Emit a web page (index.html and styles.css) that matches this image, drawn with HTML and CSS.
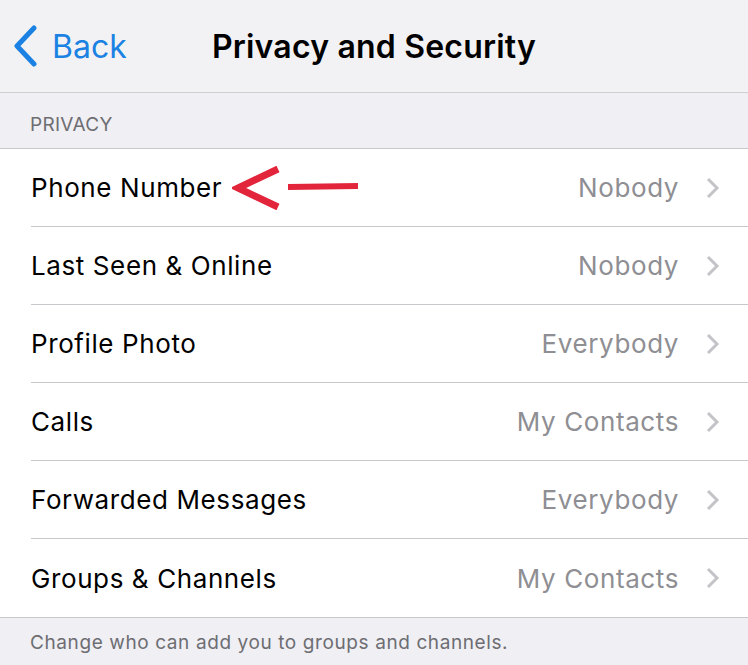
FILE: index.html
```html
<!DOCTYPE html>
<html lang="en">
<head>
    <meta charset="UTF-8">
    <title>Privacy and Security</title>
    <link rel="stylesheet" href="styles.css">
</head>
<body>
    <div class="navbar">
        <div class="back">
            <svg width="26" height="42" viewBox="0 0 26 42"><path d="M22 3 L5 21 L22 39" fill="none" stroke="#1b82e3" stroke-width="5" stroke-linecap="round" stroke-linejoin="round"/></svg>
            <span>Back</span>
        </div>
        <h1>Privacy and Security</h1>
    </div>
    <div class="section-header">PRIVACY</div>
    <div class="list">
        <div class="row">
            <span class="label">Phone Number</span>
            <svg class="arrow" width="130" height="46" viewBox="0 0 130 46"><path d="M46 4 L6 23 L46 42" fill="none" stroke="#e3253c" stroke-width="7" stroke-linejoin="miter"/><path d="M56 22 L126 21" stroke="#e3253c" stroke-width="6"/></svg>
            <span class="value">Nobody</span>
            <svg class="chev" width="14" height="22" viewBox="0 0 14 22"><path d="M2 2 L11 11 L2 20" fill="none" stroke="#c4c4c8" stroke-width="3"/></svg>
        </div>
        <div class="row">
            <span class="label">Last Seen &amp; Online</span>
            <span class="value">Nobody</span>
            <svg class="chev" width="14" height="22" viewBox="0 0 14 22"><path d="M2 2 L11 11 L2 20" fill="none" stroke="#c4c4c8" stroke-width="3"/></svg>
        </div>
        <div class="row">
            <span class="label">Profile Photo</span>
            <span class="value">Everybody</span>
            <svg class="chev" width="14" height="22" viewBox="0 0 14 22"><path d="M2 2 L11 11 L2 20" fill="none" stroke="#c4c4c8" stroke-width="3"/></svg>
        </div>
        <div class="row">
            <span class="label">Calls</span>
            <span class="value">My Contacts</span>
            <svg class="chev" width="14" height="22" viewBox="0 0 14 22"><path d="M2 2 L11 11 L2 20" fill="none" stroke="#c4c4c8" stroke-width="3"/></svg>
        </div>
        <div class="row">
            <span class="label">Forwarded Messages</span>
            <span class="value">Everybody</span>
            <svg class="chev" width="14" height="22" viewBox="0 0 14 22"><path d="M2 2 L11 11 L2 20" fill="none" stroke="#c4c4c8" stroke-width="3"/></svg>
        </div>
        <div class="row">
            <span class="label">Groups &amp; Channels</span>
            <span class="value">My Contacts</span>
            <svg class="chev" width="14" height="22" viewBox="0 0 14 22"><path d="M2 2 L11 11 L2 20" fill="none" stroke="#c4c4c8" stroke-width="3"/></svg>
        </div>
    </div>
    <div class="footer">Change who can add you to groups and channels.</div>
</body>
</html>
```

FILE: styles.css
```css
body {
    margin: 0;
    font-family: Inter, "Noto Sans", sans-serif;
    background-color: #efeff4;
}
.navbar {
    height: 92px;
    background-color: #f2f2f4;
    border-bottom: 1px solid #cfcfd2;
    position: relative;
    display: flex;
    align-items: center;
}
.back {
    display: flex;
    align-items: center;
    color: #1b82e3;
    font-size: 32px;
    padding-left: 12px;
}
.back svg {
    margin-right: 14px;
}
.navbar h1 {
    position: absolute;
    left: 0;
    right: 0;
    margin: 0;
    text-align: center;
    font-size: 32px;
    font-weight: 600;
    letter-spacing: 0.2px;
    pointer-events: none;
}
.section-header {
    height: 56px;
    padding-left: 30px;
    display: flex;
    align-items: center;
    font-size: 19px;
    letter-spacing: 0.3px;
    color: #6d6d72;
    border-bottom: 1px solid #c8c7cc;
    box-sizing: border-box;
    padding-top: 8px;
}
.list {
    background-color: white;
    border-bottom: 1px solid #c8c7cc;
}
.row {
    height: 78px;
    margin-left: 31px;
    padding-right: 28px;
    display: flex;
    align-items: center;
    border-bottom: 1px solid #c8c7cc;
    box-sizing: border-box;
    font-size: 26px;
    letter-spacing: 0.6px;
}
.row:last-child {
    border-bottom: none;
}
.label {
    color: #000;
}
.arrow {
    margin-left: 10px;
}
.value {
    margin-left: auto;
    color: #8e8e93;
    margin-right: 27px;
}
.footer {
    padding: 13px 30px;
    font-size: 19px;
    letter-spacing: 0.6px;
    color: #6d6d72;
}
```
